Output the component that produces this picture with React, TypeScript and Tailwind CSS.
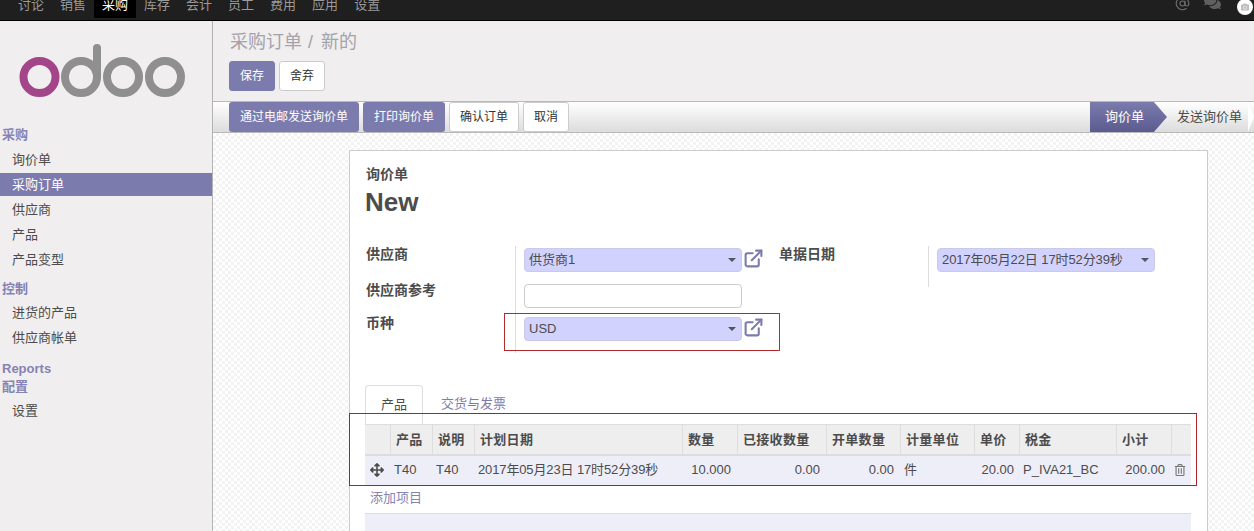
import React from 'react';
import { AtSign, ExternalLink } from 'lucide-react';
import { FaArrowsAlt, FaCamera, FaComments, FaRegTrashAlt } from 'react-icons/fa';

const topMenu = ['讨论', '销售', '采购', '库存', '会计', '员工', '费用', '应用', '设置'];

const columns = [
  { label: '', width: 25 },
  { label: '产品', width: 42 },
  { label: '说明', width: 42 },
  { label: '计划日期', width: 208 },
  { label: '数量', width: 55 },
  { label: '已接收数量', width: 89 },
  { label: '开单数量', width: 74 },
  { label: '计量单位', width: 74 },
  { label: '单价', width: 45 },
  { label: '税金', width: 97 },
  { label: '小计', width: 55 },
  { label: '', width: 20 },
];

function OdooLogo() {
  return (
    <svg width="170" height="56" viewBox="0 0 170 56" className="ml-[18px]">
      <circle cx="21.5" cy="33" r="16" fill="none" stroke="#a24689" strokeWidth="8" />
      <circle cx="63" cy="33" r="16" fill="none" stroke="#8f8f8f" strokeWidth="8" />
      <path d="M79 33V4" fill="none" stroke="#8f8f8f" strokeWidth="8" strokeLinecap="round" />
      <circle cx="105" cy="33" r="16" fill="none" stroke="#8f8f8f" strokeWidth="8" />
      <circle cx="147" cy="33" r="16" fill="none" stroke="#8f8f8f" strokeWidth="8" />
    </svg>
  );
}

function SideHeader({ children, className = 'h-[22px]' }: { children: React.ReactNode; className?: string }) {
  return <div className={`${className} pl-[2px] text-[13px] font-bold leading-[18px] text-[#8583b5]`}>{children}</div>;
}

function SideItem({ children, active = false }: { children: React.ReactNode; active?: boolean }) {
  return (
    <div className={`mb-[2px] h-[23px] pl-[12px] text-[13px] leading-[23px] ${active ? 'bg-[#7c7bad] text-white' : 'text-[#4c4c4c]'}`}>
      {children}
    </div>
  );
}

function Many2One({ value }: { value: React.ReactNode }) {
  return (
    <div className="flex h-[24px] w-[218px] items-center justify-between rounded-[4px] border border-[#c9c9e8] bg-[#d2d2ff] pl-[4px] pr-[3px] text-[13px] text-[#4c4c4c]">
      <span>{value}</span>
      <span className="mr-[2px] h-0 w-0 border-x-[4px] border-t-[4px] border-x-transparent border-t-[#555]" />
    </div>
  );
}

function ExtLink() {
  return <ExternalLink size={21} strokeWidth={2.4} className="ml-[1px] text-[#7c7bad]" />;
}

export default function App() {
  return (
    <div className="flex h-[531px] w-[1254px] flex-col overflow-hidden bg-white font-['Liberation_Sans','Noto_Sans_CJK_SC',sans-serif] text-[13px] text-[#4c4c4c]">
      {/* Top bar */}
      <div className="flex h-[21px] shrink-0 items-start border-b border-black bg-[#1f1f1f] pl-[10px]">
        {topMenu.map((item) => (
          <div
            key={item}
            className={`h-[18px] px-[8px] text-[13px] leading-[9px] ${item === '采购' ? 'bg-black text-white' : 'text-[#9a9a9a]'}`}
          >
            {item}
          </div>
        ))}
        <div className="ml-auto flex items-start">
          <AtSign size={15} strokeWidth={1.8} className="-mt-[4px] text-[#6f6f6f]" />
          <FaComments size={17} className="-mt-[6px] ml-[14px] text-[#5f5f5f]" />
          <div className="-mt-[1px] ml-[16px] mr-[1px] flex h-[16px] w-[16px] items-center justify-center rounded-full bg-white">
            <FaCamera size={8} className="text-[#bdbdbd]" />
          </div>
        </div>
      </div>

      <div className="flex min-h-0 flex-1">
        {/* Sidebar */}
        <aside className="w-[213px] shrink-0 border-r border-[#b3b3b3] bg-[#f0eeee]">
          <div className="h-[105px] pt-[23px]">
            <OdooLogo />
          </div>
          <SideHeader>采购</SideHeader>
          <SideItem>询价单</SideItem>
          <SideItem active>采购订单</SideItem>
          <SideItem>供应商</SideItem>
          <SideItem>产品</SideItem>
          <SideItem>产品变型</SideItem>
          <SideHeader className="mt-[9px] h-[21px]">控制</SideHeader>
          <SideItem>进货的产品</SideItem>
          <SideItem>供应商帐单</SideItem>
          <SideHeader className="mt-[11px] h-[18px]">Reports</SideHeader>
          <SideHeader className="h-[21px]">配置</SideHeader>
          <SideItem>设置</SideItem>
        </aside>

        <main className="flex min-w-0 flex-1 flex-col">
          {/* Control panel */}
          <div className="h-[80px] shrink-0 bg-[#f0eeee] pl-[17px] pt-[9px]">
            <div className="text-[18px] leading-[24px] text-[#a5a2ab]">
              采购订单<span className="ml-[6px]">/</span>
              <span className="ml-[8px]">新的</span>
            </div>
            <div className="-ml-[1px] mt-[7px] flex gap-[4px]">
              <button className="h-[30px] w-[46px] rounded-[3px] border border-[#7c7bad] bg-[#7c7bad] text-[12px] text-white">保存</button>
              <button className="h-[30px] w-[46px] rounded-[3px] border border-[#cccccc] bg-white text-[12px] text-[#333]">舍弃</button>
            </div>
          </div>

          {/* Status bar */}
          <div className="flex h-[32px] shrink-0 items-center border-y border-[#b9b9b9] bg-gradient-to-b from-white to-[#dcdcdc] pl-[16px]">
            <div className="flex gap-[4px]">
              <button className="h-[30px] w-[130px] rounded-[3px] bg-[#7c7bad] text-[12px] text-white">通过电邮发送询价单</button>
              <button className="h-[30px] w-[82px] rounded-[3px] bg-[#7c7bad] text-[12px] text-white">打印询价单</button>
              <button className="h-[30px] w-[70px] rounded-[3px] border border-[#cccccc] bg-white text-[12px] text-[#333]">确认订单</button>
              <button className="h-[30px] w-[46px] rounded-[3px] border border-[#cccccc] bg-white text-[12px] text-[#333]">取消</button>
            </div>
            <div className="ml-auto flex h-[30px] items-center">
              <div className="flex h-[30px] w-[77px] items-center bg-gradient-to-b from-[#7c7bad] to-[#5c5b90] pl-[15px] text-[13px] text-white [clip-path:polygon(0_0,83%_0,100%_50%,83%_100%,0_100%)]">
                询价单
              </div>
              <div className="ml-[10px] w-[71px] text-[13px] text-[#4c4c4c]">发送询价单</div>
              <div className="h-[30px] w-[6px] bg-white [clip-path:polygon(0_0,100%_50%,0_100%)]" />
            </div>
          </div>

          {/* Form view */}
          <div className="min-h-0 flex-1 bg-[repeating-conic-gradient(#f3f3f3_0_25%,#ffffff_0_50%)] bg-[length:6px_6px] pl-[136px] pt-[17px]">
            <div className="relative h-[420px] w-[859px] border border-[#cccccc] bg-white pl-[15px] pr-[16px] pt-[15px]">
              <div className="pl-[1px] text-[14px] font-bold leading-4">询价单</div>
              <h1 className="mt-[4px] text-[26px] font-bold leading-8 text-[#4c4c4c]">New</h1>

              <div className="mt-[28px] flex">
                <div className="grid w-[414px] grid-cols-[150px_1fr] text-[14px]">
                  <div className="h-[36px] pl-[1px] font-bold leading-4">供应商</div>
                  <div className="flex h-[36px] items-start border-l border-[#dddddd] pl-[8px] pt-[2px]">
                    <Many2One value="供货商1" />
                    <ExtLink />
                  </div>
                  <div className="h-[33px] pl-[1px] font-bold leading-4">供应商参考</div>
                  <div className="h-[33px] border-l border-[#dddddd] pl-[8px] pt-[2px]">
                    <div className="h-[24px] w-[218px] rounded-[4px] border border-[#cccccc] bg-white" />
                  </div>
                  <div className="h-[38px] pl-[1px] font-bold leading-4">币种</div>
                  <div className="flex h-[38px] items-start border-l border-[#dddddd] pl-[8px] pt-[2px]">
                    <Many2One value="USD" />
                    <ExtLink />
                  </div>
                </div>
                <div className="grid h-[41px] grid-cols-[149px_1fr] text-[14px]">
                  <div className="font-bold leading-4">单据日期</div>
                  <div className="border-l border-[#dddddd] pl-[8px] pt-[2px]">
                    <Many2One value={<span className="tracking-[-0.1px]">2017年05月22日 17时52分39秒</span>} />
                  </div>
                </div>
              </div>

              {/* Tabs */}
              <div className="mt-[32px] flex h-[39px]">
                <div className="w-[58px] rounded-t-[4px] border border-b-0 border-[#dddddd] bg-white pt-[11px] text-center leading-4">产品</div>
                <div className="ml-[18px] pt-[11px] leading-4 text-[#7c7bad]">交货与发票</div>
              </div>

              {/* Order lines */}
              <table className="w-[826px] table-fixed border-collapse text-[13px]">
                <colgroup>
                  {columns.map((col, i) => (
                    <col key={i} style={{ width: col.width }} />
                  ))}
                </colgroup>
                <thead>
                  <tr className="h-[30px] border-y border-b-2 border-t-[#dddddd] border-b-[#dddddd] bg-[#eeeeee]">
                    {columns.map((col, i) => (
                      <th key={i} className={`pl-[5.5px] text-left font-bold tracking-[0.3px] ${i > 0 ? 'border-l border-[#dddddd]' : ''}`}>
                        {col.label}
                      </th>
                    ))}
                  </tr>
                </thead>
                <tbody>
                  <tr className="h-[30px] bg-[#eeeef8]">
                    <td className="pl-[5px] text-[#4c4c4c]"><FaArrowsAlt size={14} /></td>
                    <td className="pl-[4px]">T40</td>
                    <td className="pl-[4px]">T40</td>
                    <td className="pl-[4px] tracking-[-0.13px]">2017年05月23日 17时52分39秒</td>
                    <td className="pr-[6px] text-right">10.000</td>
                    <td className="pr-[6px] text-right">0.00</td>
                    <td className="pr-[6px] text-right">0.00</td>
                    <td className="pl-[4px]">件</td>
                    <td className="pr-[5px] text-right">20.00</td>
                    <td className="pl-[4px]">P_IVA21_BC</td>
                    <td className="pr-[6px] text-right">200.00</td>
                    <td className="pl-[3px] text-[#777]"><FaRegTrashAlt size={12} /></td>
                  </tr>
                </tbody>
              </table>
              <div className="h-[28px] pl-[5px] pt-[5px] leading-4 text-[#8583b5]">添加项目</div>
              <div className="h-[40px] border-t border-[#dddddd] bg-[#eeeef8]" />

              {/* Red annotation boxes */}
              <div className="absolute left-[154px] top-[162px] h-[38px] w-[276px] border border-[#b22a2e]" />
              <div className="absolute left-[-1px] top-[262px] h-[73px] w-[848px] border border-[#a8232b]" />
            </div>
          </div>
        </main>
      </div>
    </div>
  );
}
